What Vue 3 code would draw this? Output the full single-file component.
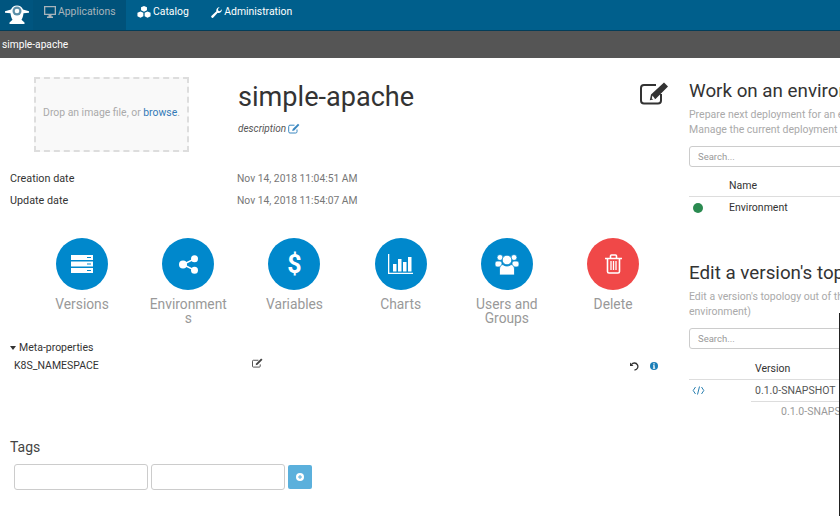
<script setup>
const actions = [
  { label: 'Versions', icon: 'versions' },
  { label: 'Environments', icon: 'share', breakAll: true },
  { label: 'Variables', icon: 'dollar' },
  { label: 'Charts', icon: 'chart' },
  { label: 'Users and Groups', icon: 'users' },
  { label: 'Delete', icon: 'trash', danger: true }
]
</script>

<template>
  <div class="page">
    <header class="topbar">
      <div class="logo">
        <svg width="26" height="24" viewBox="0 0 26 24">
          <path fill="#fff" d="M7 6.500a6.500 6.500 0 0 1 12 0l6 1.800v1.500l-5.500 .5c-.3 3-1 5-2 6.500l3 2.700v1.500H5.500v-1.500l3-2.700c-1-1.500-1.700-3.500-2-6.500L1 9.800V8.300z"/>
          <circle cx="13" cy="8" r="4.500" fill="#5b8fa8"/>
          <circle cx="13" cy="8" r="2.300" fill="#fff"/>
        </svg>
      </div>
      <nav class="nav">
        <a class="nav-item active">
          <svg width="12" height="12" viewBox="0 0 12 12"><path fill="currentColor" fill-rule="evenodd" d="M0 0h12v9H7.500v1.500H9V12H3v-1.500h1.500V9H0zM1.300 1.300v6.400h9.400V1.300z"/></svg>
          Applications
        </a>
        <a class="nav-item">
          <svg width="14" height="12" viewBox="0 0 15 13"><path fill="currentColor" d="M7.500 0l3.200 1.400v3.300l-3.200 1.400-3.200-1.400V1.400zM3.700 6l3.100 1.400v3.700L3.700 12.600.4 11.100V7.400zM11.300 6l3.300 1.400v3.700l-3.300 1.500-3.100-1.500V7.400z"/></svg>
          Catalog
        </a>
        <a class="nav-item">
          <svg width="11" height="11" viewBox="0 0 13 13"><path fill="currentColor" d="M12.700 2.800a3.600 3.600 0 0 1-4.800 3.900L2.800 12.400a1.300 1.300 0 0 1-2-.1 1.300 1.300 0 0 1-.1-2L6.400 5A3.600 3.600 0 0 1 10.200.4L8.200 2.500l.4 2 2 .4z"/></svg>
          Administration
        </a>
      </nav>
    </header>
    <div class="crumb">simple-apache</div>

    <main class="content">
      <section class="left">
        <div class="intro">
          <div class="drop">
            <span>Drop an image file, or <b>browse</b>.</span>
          </div>
          <div class="title-box">
            <h1>simple-apache</h1>
            <p class="desc">
              <i>description</i>
              <svg width="12" height="11" viewBox="0 0 12 11"><path fill="none" stroke="#3a87c0" d="M9 6.500v2.200a1.300 1.300 0 0 1-1.300 1.300H2a1.300 1.300 0 0 1-1.300-1.300V3.500A1.300 1.300 0 0 1 2 2.200h4.500"/><path fill="#3a87c0" d="M10 .7l1.400 1.400-5.200 5.300-2 .5.500-2z"/></svg>
            </p>
          </div>
          <svg class="big-edit" width="29" height="23" viewBox="0 0 29 23">
            <path fill="none" stroke="#333" stroke-width="2" d="M21 12v6.500a3 3 0 0 1-3 3H4a3 3 0 0 1-3-3V6a3 3 0 0 1 3-3h12"/>
            <path fill="#333" d="M24 .5l4 4L15.500 17 9.800 18.300 11 12.600zM12.500 13.500l-.7 3 1.500.9 1.700-.4z"/>
          </svg>
        </div>

        <dl class="dates">
          <dt>Creation date</dt><dd>Nov 14, 2018 11:04:51 AM</dd>
          <dt>Update date</dt><dd>Nov 14, 2018 11:54:07 AM</dd>
        </dl>

        <div class="actions">
          <div v-for="a in actions" :key="a.label" class="action">
            <div class="circle" :class="{ danger: a.danger }">
              <svg v-if="a.icon === 'versions'" width="22" height="18" viewBox="0 0 22 18"><path fill="#fff" fill-rule="evenodd" d="M0 0h22v5H0zM0 6.500h22v5H0zM0 13h22v5H0zM16 2v1h4V2zM16 8.500v1h4v-1zM16 15v1h4v-1z"/></svg>
              <svg v-else-if="a.icon === 'share'" width="19" height="19" viewBox="0 0 19 19"><g fill="#fff"><circle cx="4" cy="9.500" r="4"/><circle cx="15.500" cy="3.800" r="3.500"/><circle cx="15.500" cy="15.200" r="3.500"/></g><path stroke="#fff" stroke-width="1.500" d="M4 9.500l11.500-5.700M4 9.500l11.500 5.700"/></svg>
              <span v-else-if="a.icon === 'dollar'" class="dollar">$</span>
              <svg v-else-if="a.icon === 'chart'" width="25" height="20" viewBox="0 0 25 20"><path fill="#fff" d="M0 0h1.300v18.700H25V20H0zM5 10h3.500v7.500H5zM10 5h3.500v12.500H10zM15 8h3.500v9.500H15zM20 3h3.500v14.500H20z"/></svg>
              <svg v-else-if="a.icon === 'users'" width="24" height="23" viewBox="0 0 24 21"><g fill="#fff" stroke="#0088cc" stroke-width=".8"><circle cx="5" cy="3.500" r="3"/><circle cx="19" cy="3.500" r="3"/><rect x="0" y="7" width="7" height="6" rx="2"/><rect x="17" y="7" width="7" height="6" rx="2"/><circle cx="12" cy="6" r="4.800"/><path d="M4.500 21v-6c0-3 2-4.500 3.500-4.500 1 1 2.500 1.500 4 1.500s3-.5 4-1.500c1.500 0 3.500 1.500 3.500 4.500v6z"/></g></svg>
              <svg v-else width="17" height="20" viewBox="0 0 17 20"><path fill="none" stroke="#fff" stroke-width="1.600" d="M2.500 5v12.500a1.500 1.500 0 0 0 1.500 1.500h9a1.500 1.500 0 0 0 1.500-1.500V5M0 4.500h17M5.500 4V2a1 1 0 0 1 1-1h4a1 1 0 0 1 1 1v2"/><path stroke="#fff" stroke-width="1.300" d="M6 7v9M8.500 7v9M11 7v9"/></svg>
            </div>
            <div class="action-label" :class="{ breaks: a.breakAll }">{{ a.label }}</div>
          </div>
        </div>

        <div class="meta">
          <div class="meta-head"><span class="caret"></span>Meta-properties</div>
          <div class="meta-row">
            <span class="meta-key">K8S_NAMESPACE</span>
            <svg class="meta-edit" width="11" height="10" viewBox="0 0 12 11"><path fill="none" stroke="#444" d="M9 7v2a1 1 0 0 1-1 1H1.500a1 1 0 0 1-1-1V3.500a1 1 0 0 1 1-1H7"/><path fill="#444" d="M10 .5l1.500 1.500-5.500 5.500-2 .5.500-2z"/></svg>
            <span class="meta-tools">
              <svg width="9" height="9" viewBox="0 0 9 9"><path fill="none" stroke="#333" stroke-width="1.300" d="M1.500 2.500A3.500 3.500 0 1 1 4.500 8"/><path fill="#333" d="M0 .5l3.500 3.500H0z"/></svg>
              <svg width="8" height="8" viewBox="0 0 8 8"><circle cx="4" cy="4" r="4" fill="#1b7fb8"/><path fill="#fff" d="M3.300 1.300h1.400v1.200H3.300zM3 3.300h1.700v2.500h.5v1H2.900v-1h.5V4.200H3z"/></svg>
            </span>
          </div>
        </div>

        <div class="tags">
          <h2>Tags</h2>
          <div class="tag-row">
            <input class="tag-input" />
            <input class="tag-input" />
            <button class="tag-add">
              <svg width="8" height="8" viewBox="0 0 8 8"><circle cx="4" cy="4" r="4" fill="#fff"/><path stroke="#5bb0dc" d="M4 2v4M2 4h4"/></svg>
            </button>
          </div>
        </div>
      </section>

      <section class="right">
        <div class="panel first">
          <h2 class="panel-title">Work on an environment</h2>
          <p class="panel-text">Prepare next deployment for an environment<br />Manage the current deployment for the environment</p>
          <div class="search">Search...</div>
          <div class="thead env"><span>Name</span></div>
          <div class="trow env">
            <span class="dot"></span>
            <span>Environment</span>
          </div>
        </div>

        <div class="panel second">
          <h2 class="panel-title">Edit a version's topology</h2>
          <p class="panel-text">Edit a version's topology out of the context of an<br />environment)</p>
          <div class="search">Search...</div>
          <div class="thead ver"><span>Version</span></div>
          <div class="trow ver">
            <svg width="13" height="9" viewBox="0 0 12 9"><path fill="none" stroke="#2a7fb0" d="M3 1L.7 4.500 3 8M9 1l2.300 3.500L9 8M7 .5L5 8.500"/></svg>
            <span class="ver-cell">0.1.0-SNAPSHOT</span>
          </div>
          <div class="sub-ver">0.1.0-SNAPSHOT</div>
        </div>
      </section>
    </main>
    <div class="edge"></div>
  </div>
</template>

<style>
html, body { margin: 0; overflow: hidden; background: #fff; }
</style>

<style scoped>
.page {
  position: relative;
  width: 840px;
  height: 516px;
  overflow: hidden;
  background: #fff;
  color: #333;
  font-family: Roboto, "Liberation Sans", sans-serif;
  font-size: 10.500px;
  line-height: 14px;
}
.topbar {
  display: flex;
  height: 30px;
  background: #005f8c;
  border-bottom: 1px solid #033d59;
}
.logo {
  width: 33px;
  flex: none;
  display: flex;
  align-items: center;
  justify-content: center;
  background: #00557f;
}
.nav { display: flex; }
.nav-item {
  display: flex;
  align-items: center;
  gap: 2px;
  height: 24px;
  padding: 0 11.500px 6px 11px;
  color: #fff;
  font-size: 10.400px;
}
.nav-item svg { flex: none; }
.nav-item.active {
  background: #00527a;
  color: #a9b4ba;
  height: 30px;
  padding: 0 0 7px 11px;
  box-sizing: border-box;
  width: 93px;
}
.crumb {
  height: 27px;
  box-sizing: border-box;
  padding: 7px 2px 0;
  background: #555;
  color: #fff;
  font-size: 10.200px;
}
.content {
  display: flex;
  height: 458px;
}
.left {
  width: 670px;
  flex: none;
  padding-left: 10px;
  box-sizing: border-box;
}
.intro {
  position: relative;
  display: flex;
  padding: 19px 0 0 24px;
  height: 94px;
  box-sizing: border-box;
}
.drop {
  width: 155px;
  height: 75px;
  box-sizing: border-box;
  padding-bottom: 4px;
  border: 2px dashed #ddd;
  background: #f9f9f9;
  display: flex;
  align-items: center;
  justify-content: center;
  color: #aaa;
  font-size: 10.400px;
  white-space: nowrap;
}
.drop b { font-weight: 400; color: #337ab7; }
.title-box { margin-left: 49px; }
h1 {
  margin: 4px 0 0;
  font-size: 27.100px;
  font-weight: 400;
  line-height: 32px;
  color: #333;
}
.desc {
  margin: 9px 0 0;
  display: flex;
  align-items: center;
  gap: 2px;
  font-size: 10px;
  color: #555;
}
.desc svg { margin-top: -2px; }
.big-edit { position: absolute; left: 630px; top: 24px; }
.dates {
  display: grid;
  grid-template-columns: 227px 1fr;
  row-gap: 8px;
  margin: 20px 0 0;
}
.dates dt { color: #333; font-size: 10.800px; }
.dates dd { margin: 0; color: #777; font-size: 10.300px; }
.actions {
  display: flex;
  margin: 30px 0 0 19px;
}
.action {
  width: 106.200px;
  display: flex;
  flex-direction: column;
  align-items: center;
  flex: none;
}
.circle {
  width: 52px;
  height: 52px;
  border-radius: 50%;
  background: #0088cc;
  display: flex;
  align-items: center;
  justify-content: center;
}
.circle.danger { background: #f04848; }
.dollar {
  color: #fff;
  font-size: 25px;
  font-weight: 700;
  line-height: 1;
}
.action-label {
  width: 80px;
  margin-top: 7px;
  font-size: 13.800px;
  line-height: 14px;
  color: #999;
  text-align: center;
  overflow-wrap: break-word;
}
.meta { margin-top: 16px; }
.meta-head {
  display: flex;
  align-items: center;
  gap: 3px;
}
.caret {
  width: 0;
  height: 0;
  border-left: 3px solid transparent;
  border-right: 3px solid transparent;
  border-top: 4px solid #333;
}
.meta-row {
  position: relative;
  display: flex;
  align-items: center;
  padding-left: 4px;
  margin-top: 4px;
}
.meta-key { width: 238px; }
.meta-edit { margin-top: -6px; }
.meta-tools {
  display: flex;
  align-items: center;
  gap: 11px;
  margin-left: 367px;
}
.tags { margin-top: 66px; }
.tags h2 {
  margin: 0;
  font-size: 14px;
  font-weight: 400;
  line-height: 16px;
  color: #444;
}
.tag-row {
  display: flex;
  align-items: center;
  gap: 3px;
  margin: 9px 0 0 4px;
}
.tag-input {
  width: 134px;
  height: 26px;
  padding: 0;
  box-sizing: border-box;
  border: 1px solid #ccc;
  border-radius: 3px;
  background: #fff;
}
.tag-add {
  width: 24px;
  height: 24px;
  padding: 0;
  border: 0;
  border-radius: 2px;
  background: #5bb0dc;
  display: flex;
  align-items: center;
  justify-content: center;
}
.right {
  flex: none;
  width: 340px;
  padding-left: 19px;
  box-sizing: border-box;
  white-space: nowrap;
}
.panel-title {
  margin: 0;
  font-size: 18.800px;
  font-weight: 400;
  line-height: 22px;
  color: #333;
}
.panel.first { padding-top: 22px; }
.panel.second { margin-top: 44px; }
.panel-text {
  margin: 5px 0 0;
  line-height: 15px;
  color: #aaa;
}
.search {
  height: 21px;
  width: 300px;
  box-sizing: border-box;
  margin-top: 9px;
  padding: 3px 8px;
  border: 1px solid #ccc;
  border-radius: 3px;
  font-size: 9.500px;
  color: #999;
}
.thead, .trow { display: flex; align-items: center; }
.thead {
  width: 300px;
  box-sizing: border-box;
  border-bottom: 1px solid #ddd;
}
.thead.env { height: 30px; padding: 8px 0 0 40px; }
.thead.ver { height: 31px; padding: 9px 0 0 66px; }
.trow.env { height: 21px; gap: 26px; padding-left: 4px; }
.dot { width: 10px; height: 10px; border-radius: 50%; background: #2a8a50; flex: none; }
.trow.ver { height: 22px; align-items: stretch; }
.trow.ver svg { flex: none; margin: 6px 0 0 3px; }
.ver-cell {
  margin-left: 46px;
  width: 240px;
  flex: none;
  box-sizing: border-box;
  padding: 4px 0 0 4px;
  border-bottom: 1px solid #ddd;
  color: #555;
}
.sub-ver {
  margin-top: 3px;
  padding-left: 92px;
  color: #999;
}
.edge {
  position: absolute;
  right: 0;
  top: 313px;
  bottom: 0;
  width: 1px;
  background: #222;
}
</style>
